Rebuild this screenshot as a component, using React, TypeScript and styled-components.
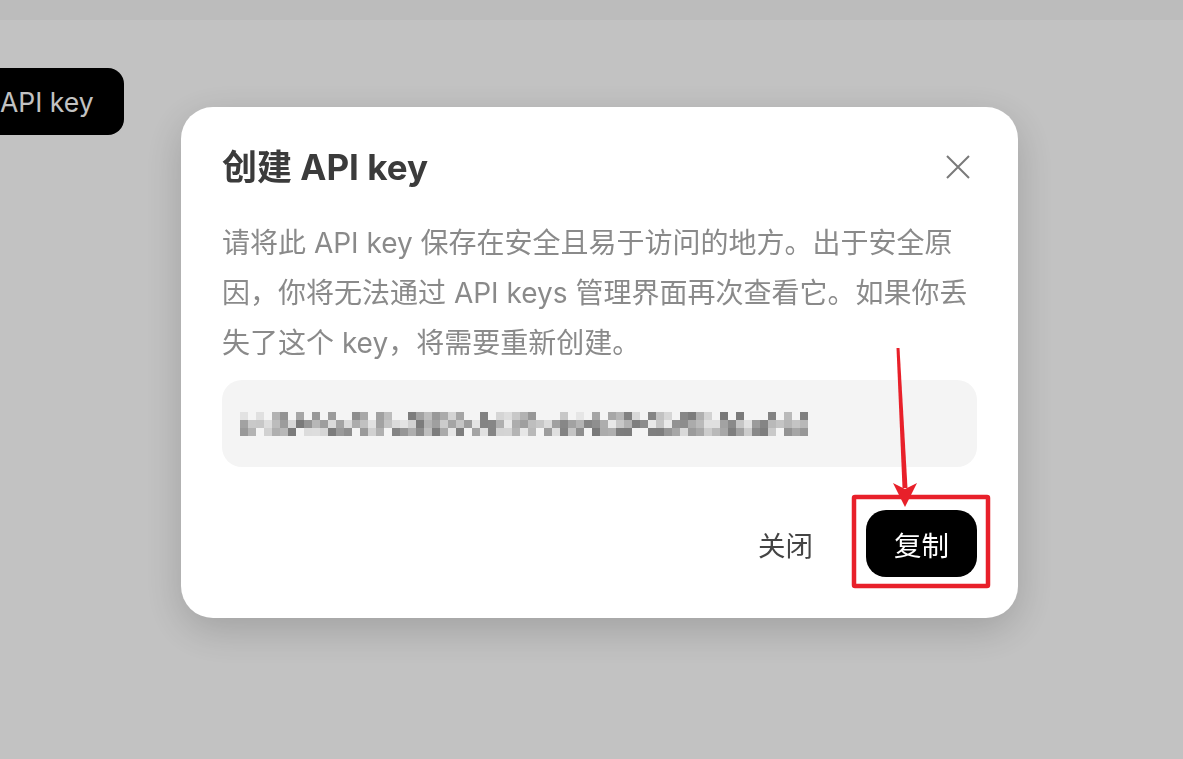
import React from "react";
import styled, { createGlobalStyle } from "styled-components";

const GlobalStyle = createGlobalStyle`
  html, body {
    margin: 0;
    padding: 0;
    background: #ffffff;
    font-family: Inter, "Noto Sans CJK SC", "Noto Sans", sans-serif;
    overflow: hidden;
  }
`;

const Page = styled.div`
  width: 1183px;
  height: 759px;
  display: flex;
  flex-direction: column;
`;

const TopBar = styled.div`
  height: 20px;
  background: #f8f8f8;
`;

const Content = styled.div`
  flex: 1;
  padding-top: 48px;
`;

const CreateButton = styled.button`
  height: 67px;
  margin-left: -30px;
  padding: 0 30px;
  border: none;
  border-radius: 16px;
  background: #000;
  color: #fff;
  font-family: inherit;
  font-size: 26.5px;
`;

const Overlay = styled.div`
  position: fixed;
  inset: 0;
  background: rgba(0, 0, 0, 0.24);
  display: flex;
  align-items: flex-start;
  padding: 107px 0 0 181px;
`;

const Modal = styled.div`
  width: 837px;
  box-sizing: border-box;
  background: #fff;
  border-radius: 32px;
  padding: 40px 41px 41px;
  box-shadow: 0 12px 40px rgba(0, 0, 0, 0.18);
  display: flex;
  flex-direction: column;
`;

const Header = styled.div`
  display: flex;
  align-items: center;
  justify-content: space-between;
  height: 40px;
`;

const Title = styled.h2`
  margin: 0;
  font-size: 35px;
  font-weight: 700;
  color: #3b3b3b;
  line-height: 40px;
`;

const CloseButton = styled.button`
  width: 24px;
  height: 24px;
  margin-right: 7px;
  padding: 0;
  border: none;
  background: none;
  display: flex;
  align-items: center;
  justify-content: center;
`;

const Description = styled.p`
  margin: 31px 0 0;
  font-size: 28px;
  line-height: 50px;
  color: #8a8a8a;
`;

const KeyBox = styled.div`
  margin-top: 12px;
  height: 87px;
  border-radius: 20px;
  background: #f4f4f4;
  display: flex;
  align-items: center;
  padding-left: 18px;
`;

const Footer = styled.div`
  margin-top: 43px;
  display: flex;
  justify-content: flex-end;
  align-items: center;
  gap: 25px;
`;

const ActionButton = styled.button<{ $primary?: boolean }>`
  height: 67px;
  padding: 0 28px;
  border: none;
  border-radius: 20px;
  font-family: inherit;
  font-size: 27.5px;
  background: ${(p) => (p.$primary ? "#000" : "transparent")};
  color: ${(p) => (p.$primary ? "#fff" : "#444")};
`;

const Annotation = styled.svg`
  position: fixed;
  left: 0;
  top: 0;
  pointer-events: none;
`;

// pixelated key, drawn as a mosaic
function Mosaic() {
  let seed = 17;
  const rnd = () => {
    seed = (seed * 9301 + 49297) % 233280;
    return seed / 233280;
  };
  const cells: React.ReactElement[] = [];
  const cols = 71;
  for (let r = 0; r < 3; r++) {
    for (let c = 0; c < cols; c++) {
      const v = rnd();
      if (r === 0 && v < 0.35) continue;
      if (r === 2 && v < 0.1) continue;
      const g = Math.round(120 + rnd() * 115);
      cells.push(
        <rect key={r + "-" + c} x={c * 8} y={r * 8} width={8} height={8} fill={`rgb(${g},${g},${g})`} />
      );
    }
  }
  return (
    <svg width={568} height={24} viewBox="0 0 568 24">
      {cells}
    </svg>
  );
}

export default function App() {
  return (
    <>
      <GlobalStyle />
      <Page>
        <TopBar />
        <Content>
          <CreateButton>API key</CreateButton>
        </Content>
      </Page>
      <Overlay>
        <Modal>
          <Header>
            <Title>创建 API key</Title>
            <CloseButton>
              <svg width="24" height="24" viewBox="0 0 24 24">
                <path d="M1 1 L23 23 M23 1 L1 23" stroke="#7a7a7a" strokeWidth="2" fill="none" />
              </svg>
            </CloseButton>
          </Header>
          <Description>
            请将此 API key 保存在安全且易于访问的地方。出于安全原因，你将无法通过 API keys 管理界面再次查看它。如果你丢失了这个 key，将需要重新创建。
          </Description>
          <KeyBox>
            <Mosaic />
          </KeyBox>
          <Footer>
            <ActionButton>关闭</ActionButton>
            <ActionButton $primary>复制</ActionButton>
          </Footer>
        </Modal>
      </Overlay>
      <Annotation width="1183" height="759" viewBox="0 0 1183 759">
        <rect x="854" y="497" width="134" height="89" fill="none" stroke="#e8202a" strokeWidth="4.5" rx="1" />
        <path d="M896.5 348 L899.5 348 L907.5 488 L902.5 488 Z" fill="#e8202a" />
        <path d="M893 483 L905 507 L917 483 L905 489 Z" fill="#e8202a" />
      </Annotation>
    </>
  );
}
